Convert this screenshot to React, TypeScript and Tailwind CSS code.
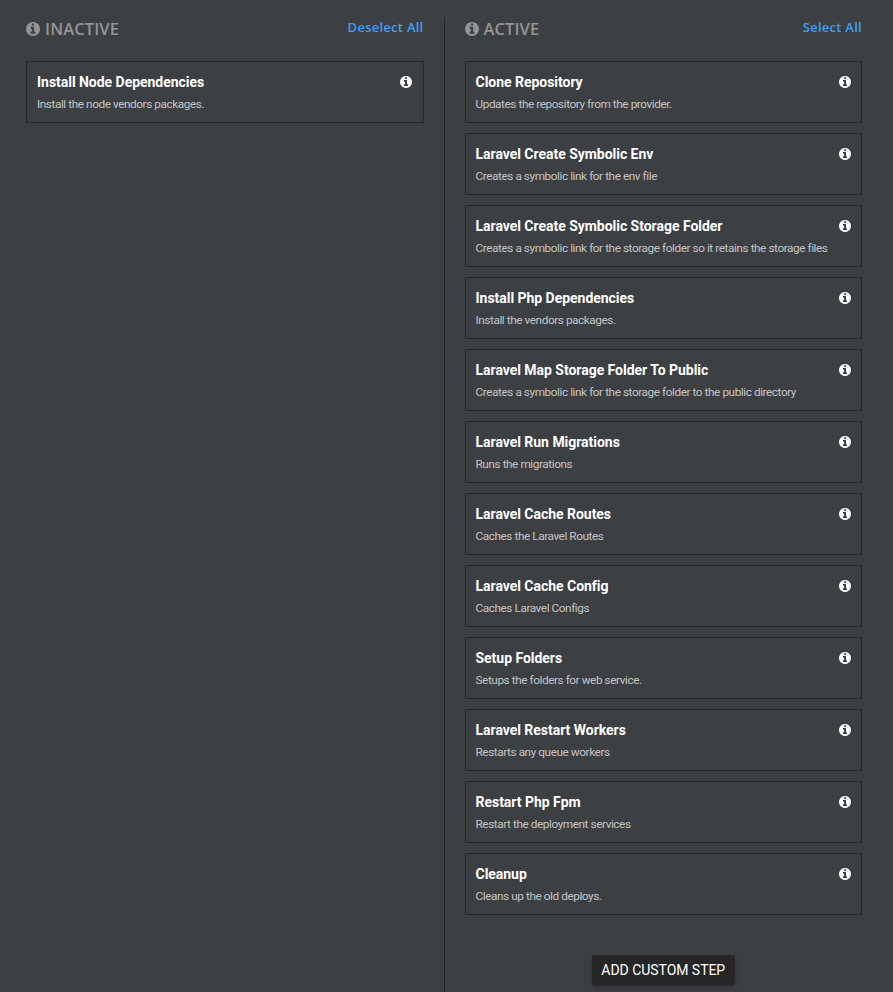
type Step = { title: string; description: string };

const inactive: Step[] = [
  { title: 'Install Node Dependencies', description: 'Install the node vendors packages.' },
];

const active: Step[] = [
  { title: 'Clone Repository', description: 'Updates the repository from the provider.' },
  { title: 'Laravel Create Symbolic Env', description: 'Creates a symbolic link for the env file' },
  {
    title: 'Laravel Create Symbolic Storage Folder',
    description: 'Creates a symbolic link for the storage folder so it retains the storage files',
  },
  { title: 'Install Php Dependencies', description: 'Install the vendors packages.' },
  {
    title: 'Laravel Map Storage Folder To Public',
    description: 'Creates a symbolic link for the storage folder to the public directory',
  },
  { title: 'Laravel Run Migrations', description: 'Runs the migrations' },
  { title: 'Laravel Cache Routes', description: 'Caches the Laravel Routes' },
  { title: 'Laravel Cache Config', description: 'Caches Laravel Configs' },
  { title: 'Setup Folders', description: 'Setups the folders for web service.' },
  { title: 'Laravel Restart Workers', description: 'Restarts any queue workers' },
  { title: 'Restart Php Fpm', description: 'Restart the deployment services' },
  { title: 'Cleanup', description: 'Cleans up the old deploys.' },
];

function InfoIcon({ className }: { className: string }) {
  return (
    <svg viewBox="0 128 1536 1536" fill="currentColor" className={className} aria-hidden="true">
      <path d="M1024 1376v-160q0-14-9-23t-23-9h-96v-512q0-14-9-23t-23-9h-320q-14 0-23 9t-9 23v160q0 14 9 23t23 9h96v320h-96q-14 0-23 9t-9 23v160q0 14 9 23t23 9h448q14 0 23-9t9-23zm-128-896v-160q0-14-9-23t-23-9h-192q-14 0-23 9t-9 23v160q0 14 9 23t23 9h192q14 0 23-9t9-23zm640 416q0 209-103 385.500t-279.500 279.500-385.500 103-385.500-103-279.500-279.500-103-385.500 103-385.500 279.500-279.500 385.500-103 385.500 103 279.500 279.500 103 385.500z" />
    </svg>
  );
}

function StepCard({ title, description }: Step) {
  return (
    <li className="h-[62px] border border-[#26282a] pt-2.5 pr-[10.2px] pl-2.5">
      <div className="flex h-5 items-center justify-between">
        <h3 className="whitespace-nowrap text-[14px] leading-5 font-bold tracking-[-0.03px] text-white">{title}</h3>
        <InfoIcon className="size-3 text-white" />
      </div>
      <p className="mt-0.5 whitespace-nowrap text-[11.8px] leading-5 tracking-[-0.435px] text-[#c3c4c5]">{description}</p>
    </li>
  );
}

function ColumnHeader({ label, action }: { label: string; action: string }) {
  return (
    <div className="flex h-[43px] items-start justify-between font-['Open_Sans',sans-serif]">
      <h2 className="flex items-center gap-[5px] text-[16.5px] leading-[22px] font-semibold tracking-[0.1px] text-[#949596]">
        <InfoIcon className="size-3.5" />
        {label}
      </h2>
      <button className="text-[13px] leading-[18px] font-semibold tracking-[0.26px] text-[#3f9ffb]">{action}</button>
    </div>
  );
}

function StepList({ steps }: { steps: Step[] }) {
  return (
    <ul className="flex flex-col gap-2.5">
      {steps.map((step) => (
        <StepCard key={step.title} {...step} />
      ))}
    </ul>
  );
}

export default function App() {
  return (
    <main className="flex h-[992px] w-[893px] overflow-hidden bg-[#3d4042] pt-[18px] pl-[26px] font-['Roboto',sans-serif]">
      <section className="w-[397.5px] shrink-0">
        <ColumnHeader label="INACTIVE" action="Deselect All" />
        <StepList steps={inactive} />
      </section>
      <section className="ml-5 w-[418.5px] shrink-0 border-l border-[#26282a] pl-5">
        <ColumnHeader label="ACTIVE" action="Select All" />
        <StepList steps={active} />
        <div className="mt-10 flex justify-center">
          <button className="h-[30px] w-[143px] rounded-[2px] bg-[#262626] text-[14px] leading-[30px] tracking-[-0.04px] whitespace-nowrap text-white shadow-[0_2px_4px_rgba(0,0,0,0.3)]">
            ADD CUSTOM STEP
          </button>
        </div>
      </section>
    </main>
  );
}
